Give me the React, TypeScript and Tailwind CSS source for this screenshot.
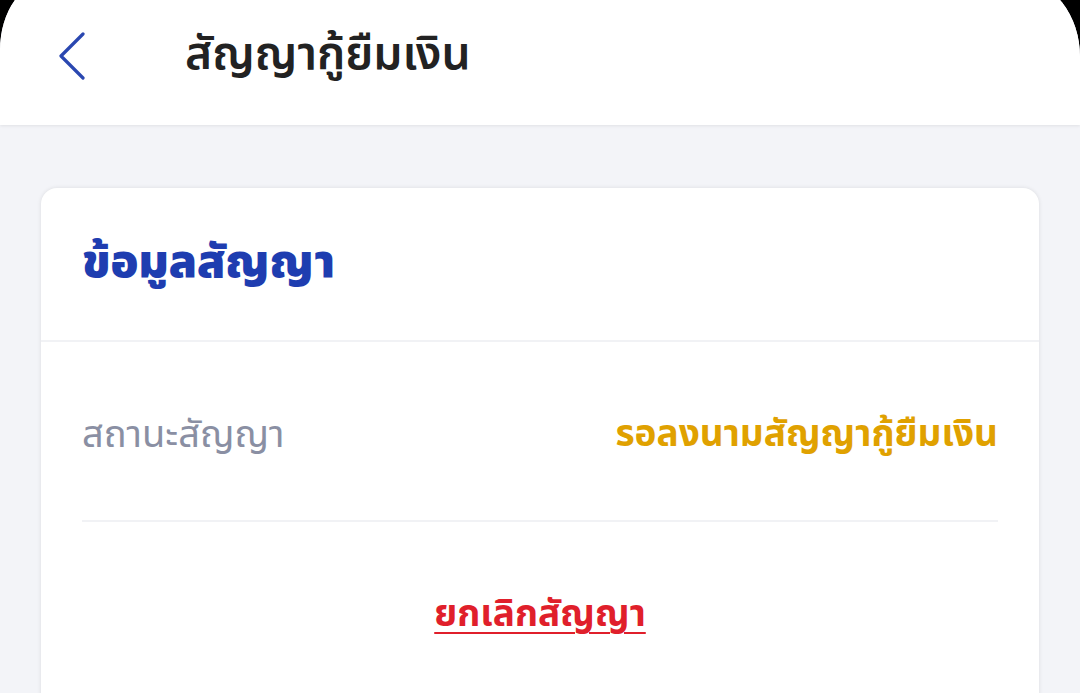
const thai = { fontFamily: '"Noto Sans Thai", "Noto Sans Thai Looped", "Noto Sans", "Liberation Sans", sans-serif' }

export default function App() {
  return (
    <div className="w-[1080px] h-[693px] overflow-hidden bg-black" style={thai}>
      <div className="h-[713px] -mt-[20px] bg-[#f3f4f8] rounded-tl-[50px_70px] rounded-tr-[61px_77px] overflow-hidden">
        <header className="h-[145px] pt-[20px] bg-white flex items-center shadow-[0_1px_3px_rgba(0,0,0,0.08)] relative">
          <div className="w-[185px] pl-[56px] pb-[14px] flex items-center">
            <svg width="32" height="48" viewBox="0 0 32 48" fill="none">
              <path d="M27 2 L5 24 L27 46" stroke="#2a47b0" strokeWidth="3.2" strokeLinecap="round" strokeLinejoin="round" />
            </svg>
          </div>
          <h1 className="text-[46px] font-semibold text-[#222222] pb-[14px]">สัญญากู้ยืมเงิน</h1>
        </header>

        <div className="px-[41px] pt-[63px]">
          <section className="bg-white rounded-[16px] shadow-[0_0_4px_rgba(0,0,0,0.1)]">
            <div className="h-[154px] px-[41px] flex items-center border-b-2 border-[#f1f2f5]">
              <h2 className="text-[46px] font-black text-[#1e3db0] pb-[2px]">ข้อมูลสัญญา</h2>
            </div>
            <div className="px-[41px]">
              <div className="h-[180px] flex items-center justify-between border-b-2 border-[#f1f2f5]">
                <span className="text-[38px] text-[#8a8fa3] pt-[9px]">สถานะสัญญา</span>
                <span className="text-[37px] font-bold text-[#e0a100] pt-[9px]">รอลงนามสัญญากู้ยืมเงิน</span>
              </div>
              <div className="h-[190px] flex justify-center pt-[66px]">
                <button className="text-[37px] font-bold text-[#e01f2b] underline underline-offset-[6px] decoration-2 h-fit">
                  ยกเลิกสัญญา
                </button>
              </div>
            </div>
          </section>
        </div>
      </div>
    </div>
  )
}
